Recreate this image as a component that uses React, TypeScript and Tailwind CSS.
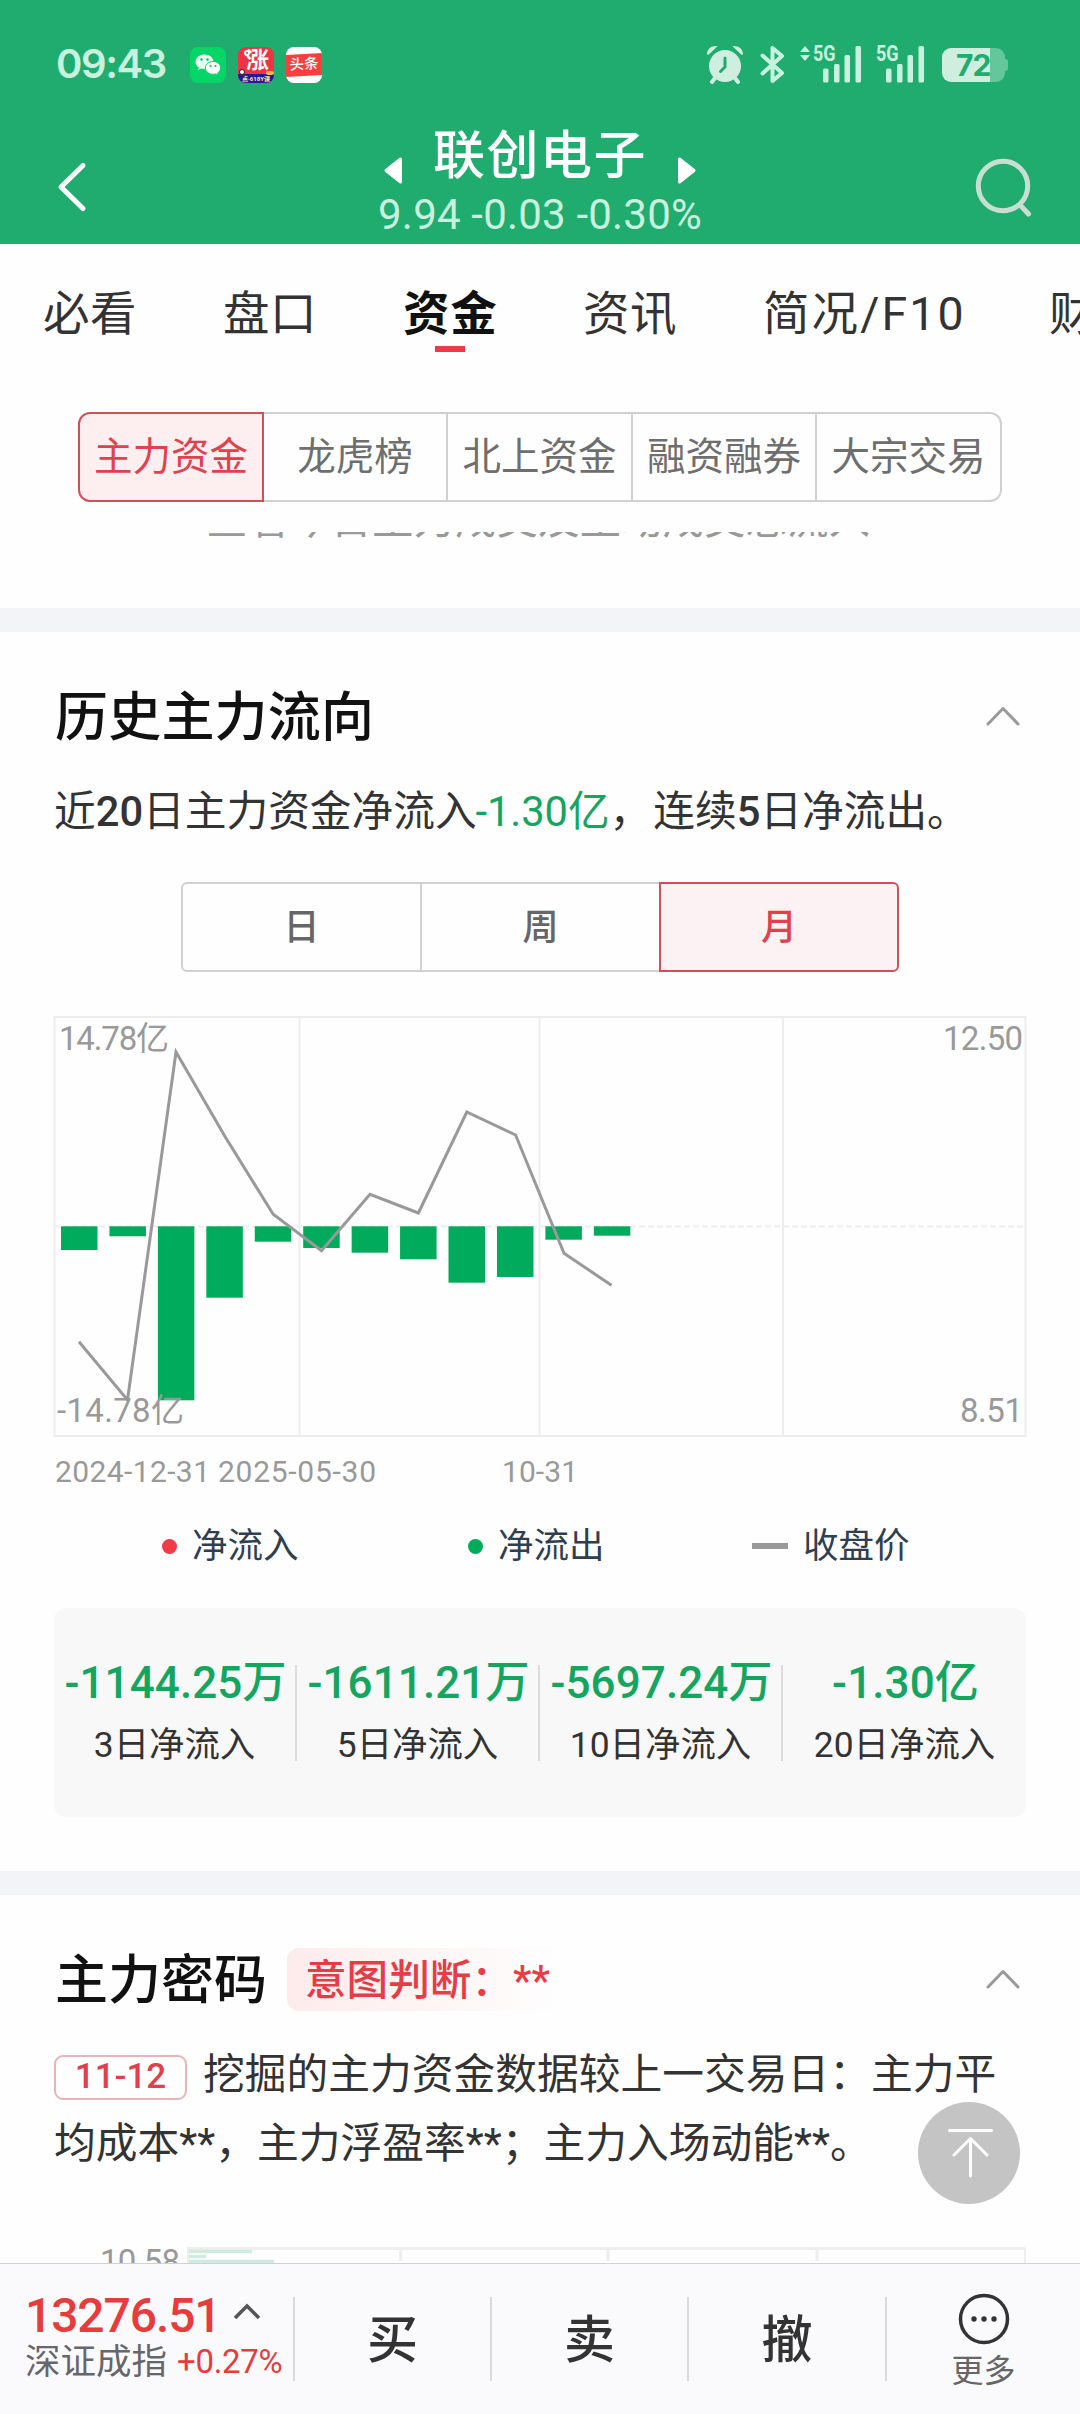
import React from "react";

const tabs = [
  { label: "必看", left: "w-[180px]" },
  { label: "盘口", left: "w-[180px]" },
  { label: "资金", left: "w-[180px]", active: true },
  { label: "资讯", left: "w-[180px]" },
  { label: "简况/F10", left: "w-[286px]" },
  { label: "财务", left: "w-[180px]" },
];

const barBottoms = [1250, 1236.3, 1400.3, 1297.7, 1241.7, 1248, 1252.7, 1259.3, 1282.7, 1277, 1239.7, 1235.7];
const pricePoints =
  "79,1341.7 127.5,1400 176,1052 224.7,1136 273.2,1214.3 321.5,1250.7 370,1194.3 418.4,1213 466.8,1112 515.6,1135 564,1253.3 611.5,1285.3";

function SignalBars() {
  return (
    <svg width="39" height="37" viewBox="0 0 39 37" fill="#c8f2df">
      <rect x="0" y="22.500" width="5.500" height="14" rx="1.500" />
      <rect x="11" y="18" width="5.500" height="18.500" rx="1.500" />
      <rect x="21.500" y="9" width="5.500" height="27.500" rx="1.500" />
      <rect x="32.500" y="0" width="5.500" height="36.500" rx="1.500" />
    </svg>
  );
}

function StatusBar() {
  return (
    <div className="flex h-[110px] items-start">
      <div className="ml-[56px] mt-[39px] w-[134px] whitespace-nowrap font-['Inter'] text-[40px] font-semibold leading-[50px] tracking-[-1.4px] text-[#c8f2df]">
        09:43
      </div>
      <div className="mt-[47px] flex gap-[12px]">
        <svg width="36" height="36" viewBox="0 0 36 36">
          <rect width="36" height="36" rx="8" fill="#06d567" />
          <path d="M14.500 7.500c-5 0-9 3.200-9 7.300 0 2.400 1.300 4.300 3.300 5.600l-.8 2.800 3-1.600c1 .3 2.200.5 3.500.5 5 0 9-3.200 9-7.300s-4-7.300-9-7.300z" fill="#e9fff2" />
          <circle cx="11.500" cy="12.500" r="1.200" fill="#06c060" />
          <circle cx="17.500" cy="12.500" r="1.200" fill="#06c060" />
          <path d="M23 14.500c-4.200 0-7.600 2.800-7.600 6.400s3.400 6.400 7.600 6.400c1 0 2-.2 2.900-.4l2.500 1.400-.6-2.400c1.700-1.200 2.800-2.900 2.800-5 0-3.600-3.400-6.400-7.600-6.400z" fill="#fff" stroke="#06cf64" strokeWidth="1" />
          <circle cx="20.500" cy="19" r="1.100" fill="#06c060" />
          <circle cx="25.500" cy="19" r="1.100" fill="#06c060" />
        </svg>
        <div className="relative h-9 w-9 overflow-hidden rounded-[8px] bg-[#ee3442]">
          <div className="pl-[3px] text-center text-[23px] font-bold leading-[27px] text-white">涨</div>
          <div className="absolute bottom-0 left-0 h-[9px] w-full bg-[#2a1696] text-center text-[6px] font-bold leading-[9px] text-[#ffe6a8]">
            点·618Y课
          </div>
          <div className="absolute left-[1px] top-[22px] h-[6px] w-[6px] rounded-full border border-[#222] bg-white" />
          <div className="absolute left-[6px] top-[3px] h-[6px] w-[6px] rounded-full border-2 border-white" />
          <div className="absolute right-0 top-[24px] h-[4px] w-[8px] rounded-full bg-[#ffb35c]" />
        </div>
        <div className="relative flex h-9 w-9 items-center overflow-hidden rounded-[8px] bg-white">
          <div className="h-[22px] w-full -skew-y-3 whitespace-nowrap bg-[#f5403f] text-center text-[14.500px] font-medium leading-[21px] text-white">
            头条
          </div>
        </div>
      </div>
      <div className="mt-[45px] ml-[384px] flex items-start text-[#c8f2df]">
        <svg width="38" height="39" viewBox="0 0 38 39" fill="#d0eee0">
          <circle cx="19" cy="21" r="16" />
          <path d="M1 9.500C1 4 5.500 .5 11.500 1.200L2.500 9.800zM37 9.500C37 4 32.500 .5 26.500 1.200l9 8.600z" />
          <path d="M9 33l-3 4M29 33l3 4" stroke="#d0eee0" strokeWidth="4" strokeLinecap="round" />
          <path d="M19 13v9l-4.500 4.500" fill="none" stroke="#21ac6f" strokeWidth="3" strokeLinecap="round" />
        </svg>
        <svg className="ml-[16px]" width="25" height="39" viewBox="0 0 25 39" fill="none" stroke="#c8f2df" strokeWidth="4" strokeLinejoin="round" strokeLinecap="round">
          <path d="M2.500 10.500L22 28l-9.500 8V3L22 11 2.500 28.500" />
        </svg>
        <svg className="ml-[15px] mt-[1px]" width="10" height="16" viewBox="0 0 10 16" fill="#c8f2df">
          <path d="M0 6l5-6 5 6zM0 9h10l-5 6z" />
        </svg>
        <div className="relative ml-[13px] mt-[1px]">
          <SignalBars />
          <span className="absolute -left-[10px] -top-[4px] origin-left scale-x-[0.82] text-[22px] font-bold leading-[24px]">5G</span>
        </div>
        <div className="relative ml-[24px] mt-[1px]">
          <SignalBars />
          <span className="absolute -left-[10px] -top-[4px] origin-left scale-x-[0.82] text-[22px] font-bold leading-[24px]">5G</span>
        </div>
        <div className="ml-[17px] mt-[3px] flex items-center">
          <div className="h-[34px] w-[63px] rounded-[9px] bg-[linear-gradient(90deg,#d0eee0_48px,#64c79b_48px)] pl-[14px] font-['Inter'] text-[30px] font-bold leading-[35px] tracking-[-1px] text-[#21ac6f]">
            72
          </div>
          <div className="h-[12px] w-[3px] rounded-r bg-[#64c79b]" />
        </div>
      </div>
    </div>
  );
}

function TitleBar() {
  return (
    <div className="grid h-[134px] grid-cols-[1fr_auto_1fr]">
      <svg className="ml-[56px] mt-[50px]" width="32" height="54" viewBox="0 0 32 54" fill="none" stroke="#fff" strokeWidth="5" strokeLinecap="round" strokeLinejoin="round">
        <path d="M27 5.500L5 27l22 21.500" />
      </svg>
      <div className="flex flex-col items-center">
        <div className="flex h-[84px] items-center text-white">
          <svg className="mt-[36px]" width="18" height="27" viewBox="0 0 18 27" fill="#fff" stroke="#fff" strokeWidth="3" strokeLinejoin="round">
            <path d="M16.500 2v23L2 13.500z" />
          </svg>
          <div className="mx-[31px] pt-[10px] text-[52px] font-medium leading-[82px] tracking-[1.500px]">联创电子</div>
          <svg className="mt-[36px]" width="18" height="27" viewBox="0 0 18 27" fill="#fff" stroke="#fff" strokeWidth="3" strokeLinejoin="round">
            <path d="M1.500 2v23L16 13.500z" />
          </svg>
        </div>
        <div className="h-[44px] text-[42px] leading-[42px] tracking-[0.200px] text-[#c8f2df]">9.94 -0.03 -0.30%</div>
      </div>
      <svg className="ml-auto mr-[48px] mt-[46px]" width="60" height="62" viewBox="0 0 60 62" fill="none" stroke="#c9ded3" strokeWidth="5" strokeLinecap="round">
        <circle cx="31" cy="30" r="24.700" />
        <path d="M49 50l7.500 8" />
      </svg>
    </div>
  );
}

function Chevron() {
  return (
    <svg width="34" height="20" viewBox="0 0 34 20" fill="none" stroke="#999" strokeWidth="3" strokeLinecap="round" strokeLinejoin="round">
      <path d="M2 18L17 2.500 32 18" />
    </svg>
  );
}

function FlowChart() {
  return (
    <svg className="block" width="1080" height="483" viewBox="0 1010 1080 483" fontFamily="Roboto, 'Noto Sans CJK SC', sans-serif">
      <g stroke="#ededed" strokeWidth="2" fill="none">
        <rect x="54.500" y="1017" width="971" height="419" />
        <path d="M299.500 1017V1435M539.500 1017V1435M783 1017V1435" />
        <path d="M54 1226.500H1025" strokeDasharray="6 3" />
      </g>
      {barBottoms.map((b, i) => (
        <rect key={i} x={61 + i * 48.44} y="1226.300" width="36.500" height={b - 1226.3} fill="#00ab5b" />
      ))}
      <polyline points={pricePoints} fill="none" stroke="#999" strokeWidth="3" />
      <g fill="#999" fontSize="33">
        <text x="59" y="1050" textLength="110">14.78亿</text>
        <text x="57" y="1422" textLength="127">-14.78亿</text>
        <text x="1023" y="1050" textAnchor="end" textLength="80">12.50</text>
        <text x="1023" y="1422" textAnchor="end" textLength="63">8.51</text>
      </g>
      <g fill="#999" fontSize="30">
        <text x="55" y="1482" textLength="155">2024-12-31</text>
        <text x="218" y="1482" textLength="158">2025-05-30</text>
        <text x="502" y="1482" textLength="76">10-31</text>
      </g>
    </svg>
  );
}

const totals = [
  { value: "-1144.25万", label: "3日净流入" },
  { value: "-1611.21万", label: "5日净流入" },
  { value: "-5697.24万", label: "10日净流入" },
  { value: "-1.30亿", label: "20日净流入" },
];

export default function App() {
  return (
    <div className="relative h-[2414px] w-[1080px] overflow-hidden bg-[#fefefe] font-['Roboto','Noto_Sans_CJK_SC',sans-serif] text-[#333]">
      <header className="h-[244px] bg-[#21ac6f]">
        <StatusBar />
        <TitleBar />
      </header>

      <nav className="flex h-[168px] pl-[43px] text-[46.500px] leading-[140px]">
        {tabs.map((t) => (
          <div key={t.label} className={t.left + " shrink-0 whitespace-nowrap"}>
            <span
              className={
                t.active
                  ? "relative inline-block font-bold tracking-[0.8px] text-[#111]"
                  : t.label === "简况/F10"
                    ? "inline-block tracking-[2.1px]"
                    : "inline-block tracking-[0.5px]"
              }
            >
              {t.label}
              {t.active && <span className="absolute left-[32px] top-[102px] h-[6px] w-[30px] bg-[#ee3a45]" />}
            </span>
          </div>
        ))}
      </nav>

      <div className="mx-[78px] flex h-[90px] w-[924px] text-[38.500px] leading-[85px] text-[#6e6e6e]">
        <div className="w-[186px] rounded-l-[12px] border-2 border-[#d0505a] bg-[#fdeeef] text-center text-[#e0414c]">主力资金</div>
        <div className="w-[184px] border-y-2 border-r-2 border-[#d0d0d0] text-center">龙虎榜</div>
        <div className="w-[185px] border-y-2 border-r-2 border-[#d0d0d0] text-center">北上资金</div>
        <div className="w-[184px] border-y-2 border-r-2 border-[#d0d0d0] text-center">融资融券</div>
        <div className="w-[185px] rounded-r-[12px] border-y-2 border-r-2 border-[#d0d0d0] text-center">大宗交易</div>
      </div>

      <div className="mt-[30px] flex h-[76px] items-start justify-start">
        <div className="flex h-[11px] items-end overflow-hidden whitespace-nowrap pl-[206px] text-[41.500px] leading-[46px] text-[#999]">
          查看今日主力成交及主动成交总流入
        </div>
      </div>
      <div className="h-[24px] bg-[#f3f4f8]" />

      <section className="h-[1239px]">
        <div className="flex h-[144px] items-center justify-between pl-[55px] pr-[60px] pt-[24px]">
          <h2 className="pt-[4px] text-[53px] font-medium leading-[80px] tracking-[0.2px] text-[#111]">历史主力流向</h2>
          <Chevron />
        </div>
        <p className="h-[106px] whitespace-nowrap pl-[54px] pt-[3px] text-[41.700px] leading-[66px]">
          近<b className="font-medium">20</b>日主力资金净流入<span className="text-[#14a55f]"><span className="-ml-[1px] tracking-[-0.1px]">-1.30</span>亿</span>，<span className="ml-[2px]">连续</span><b className="font-medium">5</b>日净流出。
        </p>
        <div className="ml-[181px] flex h-[90px] w-[718px] text-[36px] font-medium leading-[88px] text-[#666]">
          <div className="w-[241px] rounded-l-[6px] border-2 border-[#d0d0d0] text-center">日</div>
          <div className="w-[237px] border-y-2 border-[#d0d0d0] text-center">周</div>
          <div className="w-[240px] rounded-r-[6px] border-2 border-[#d0505a] bg-[#fdf2f3] text-center text-[#e0414c]">月</div>
        </div>
        <div className="mt-[38px]">
          <FlowChart />
        </div>
        <div className="flex h-[115px] pl-[162px] text-[35.500px] leading-[106px] text-[#2f3f4f]">
          <div className="flex w-[306px] items-center self-start">
            <i className="mr-[15px] h-[15px] w-[15px] rounded-full bg-[#f03c46]" />净流入
          </div>
          <div className="flex w-[284px] items-center self-start">
            <i className="mr-[15px] h-[15px] w-[15px] rounded-full bg-[#00ab5b]" />净流出
          </div>
          <div className="flex items-center self-start">
            <i className="mr-[15px] h-[6px] w-[36px] bg-[#999]" />收盘价
          </div>
        </div>
        <div className="mx-[54px] flex h-[209px] rounded-[12px] bg-[#f8f8f8] pt-[57px]">
          {totals.map((t, i) => (
            <div
              key={t.label}
              className={"h-[96px] w-[243px] whitespace-nowrap text-center " + (i < 3 ? "border-r-2 border-[#dcdcdc]" : "")}
            >
              <div className="-mt-[12px] pl-[2px] text-[44px] font-medium leading-[60px] tracking-[0.1px] text-[#14a55f]">{t.value}</div>
              <div className="pt-[2px] text-[35.400px] leading-[60px]">{t.label}</div>
            </div>
          ))}
        </div>
      </section>
      <div className="h-[24px] bg-[#f3f4f8]" />

      <section className="h-[368px]">
        <div className="flex h-[142px] items-center pl-[55px] pr-[60px] pt-[26px]">
          <h2 className="pt-[4px] text-[53px] font-medium leading-[80px] text-[#111]">主力密码</h2>
          <div className="ml-[20px] h-[63px] w-[275px] rounded-l-[12px] bg-gradient-to-r from-[#fdebec] to-[#fefefe] pl-[18px] text-[41.600px] font-medium leading-[65px] text-[#e63c46]">
            意图判断：**
          </div>
          <div className="ml-auto">
            <Chevron />
          </div>
        </div>
        <p className="h-[210px] whitespace-nowrap pl-[54px] pt-[3px] text-[41.750px] leading-[69px]">
          <span className="mr-[16px] inline-block h-[45px] w-[133px] rounded-[9px] border-2 border-[#e8b4b8] text-center align-[1px] text-[35px] font-medium leading-[39px] text-[#e0414c]">
            11-12
          </span>
          挖掘的主力资金数据较上一交易日：主力平
          <br />
          均成本**，主力浮盈率**；主力入场动能**。
        </p>
        <svg className="block" width="1080" height="16" viewBox="0 2247 1080 16" fontFamily="Roboto, sans-serif">
          <text x="100" y="2273" fontSize="33" fill="#999" textLength="80">10.58</text>
          <path d="M187 2248.500H1025M400.500 2249V2261M608 2249V2261M817 2249V2261" stroke="#eee" strokeWidth="3" />
          <path d="M188 2248V2263M1025 2248V2263" stroke="#eee" strokeWidth="2" />
          <path d="M189 2251.500h63M189 2256.500h17M189 2261.500h85" stroke="#cfeade" strokeWidth="3.500" />
        </svg>
      </section>

      <footer className="flex h-[151px] border-t border-[#cfd1d5] bg-[#fafafc] pt-[33px]">
        <div className="h-[84px] w-[295px] whitespace-nowrap border-r-2 border-[#dadadc] pl-[25px]">
          <div className="-mt-[4px] flex h-[46px] items-center text-[48px] font-medium leading-[46px] tracking-[-1.1px] text-[#e63c3c]">
            13276.51
            <svg className="mb-[9px] ml-[12px]" width="28" height="17" viewBox="0 0 28 17" fill="none" stroke="#555" strokeWidth="3.500">
              <path d="M2 15L14 3l12 12" />
            </svg>
          </div>
          <div className="mt-[1px] flex h-[44px] items-center text-[35.500px] leading-[44px] text-[#66666c]">
            深证成指<span className="ml-[10px] text-[33px] tracking-[-0.3px] text-[#e63c3c]">+0.27%</span>
          </div>
        </div>
        <button className="h-[84px] w-[197px] border-r-2 border-[#dadadc] text-[51px] font-medium leading-[88px]">买</button>
        <button className="h-[84px] w-[197px] border-r-2 border-[#dadadc] text-[51px] font-medium leading-[88px]">卖</button>
        <button className="h-[84px] w-[198px] border-r-2 border-[#dadadc] text-[51px] font-medium leading-[88px]">撤</button>
        <div className="flex w-[193px] flex-col items-center text-[32px] leading-[52px] text-[#666]">
          <svg className="-mt-[4px] shrink-0" width="52" height="52" viewBox="0 0 52 52" fill="#333">
            <circle cx="26" cy="26" r="23.500" fill="none" stroke="#333" strokeWidth="3.500" />
            <circle cx="16" cy="26" r="2.700" />
            <circle cx="26" cy="26" r="2.700" />
            <circle cx="36" cy="26" r="2.700" />
          </svg>
          更多
        </div>
      </footer>

      <button className="absolute left-[918px] top-[2102px] flex h-[102px] w-[102px] items-center justify-center rounded-full bg-[#c4c4c4]">
        <svg width="102" height="102" viewBox="0 0 102 102" fill="none" stroke="#fff" strokeWidth="3" strokeLinecap="round" strokeLinejoin="round">
          <path d="M31.500 28.500h42M52.500 74V36.500M36 53l16.500-16.500L69 53" />
        </svg>
      </button>
    </div>
  );
}
